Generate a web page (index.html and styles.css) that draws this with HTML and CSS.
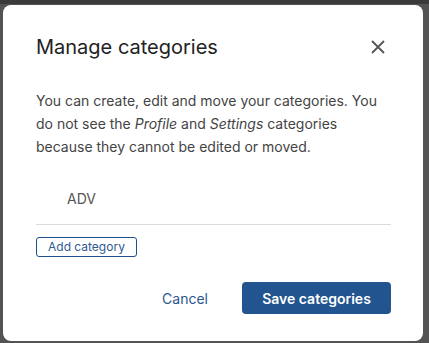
FILE: index.html
```html
<!DOCTYPE html>
<html lang="en">
<head>
    <meta charset="UTF-8">
    <meta name="viewport" content="width=device-width, initial-scale=1.0">
    <title>Manage categories</title>
    <link rel="stylesheet" href="styles.css">
</head>
<body>

    <!-- Manage categories dialog -->
    <div class="modal">
        <div class="modal-header">
            <h2>Manage categories</h2>
            <button class="close-btn" aria-label="Close">
                <svg width="14" height="14" viewBox="0 0 14 14">
                    <path d="M1 1 L13 13 M13 1 L1 13" stroke="#555" stroke-width="1.8" fill="none"/>
                </svg>
            </button>
        </div>

        <p class="intro">You can create, edit and move your categories. You do not see the <em>Profile</em> and <em>Settings</em> categories because they cannot be edited or moved.</p>

        <div class="category-list">
            <div class="category-item">ADV</div>
        </div>

        <button class="add-btn">Add category</button>

        <div class="modal-footer">
            <button class="cancel-btn">Cancel</button>
            <button class="save-btn">Save categories</button>
        </div>
    </div>

</body>
</html>
```

FILE: styles.css
```css
body {
    margin: 0;
    background: #535353;
    font-family: Inter, "Noto Sans", sans-serif;
    height: 343px;
    overflow: hidden;
    border-top: 4px solid #3a3a3a;
    box-sizing: border-box;
}
.modal {
    background: white;
    width: 420px;
    height: 336px;
    margin: 1px 0 0 3px;
    padding: 30px 32px 0 33px;
    box-sizing: border-box;
    border-radius: 8px;
}
.modal-header {
    display: flex;
    align-items: center;
    justify-content: space-between;
    height: 24px;
}
.modal-header h2 {
    margin: 0;
    font-size: 20px;
    font-weight: 400;
    color: #222;
    line-height: 24px;
}
.close-btn {
    background: none;
    border: none;
    padding: 0;
    margin-right: 6px;
    width: 14px;
    height: 14px;
    cursor: pointer;
}
.intro {
    margin: 30px 0 0;
    font-size: 14px;
    line-height: 23px;
    color: #444;
}
.category-list {
    margin-top: 31px;
    border-bottom: 1px solid #dcdcdc;
}
.category-item {
    padding: 0 0 15px 31px;
    font-size: 14px;
    line-height: 20px;
    color: #555;
}
.add-btn {
    margin-top: 12px;
    height: 20px;
    padding: 0 11px;
    background: white;
    border: 1px solid #1f4e8c;
    border-radius: 3px;
    color: #2f5a92;
    font-family: inherit;
    font-size: 12px;
    line-height: 18px;
    cursor: pointer;
}
.modal-footer {
    display: flex;
    justify-content: flex-end;
    align-items: center;
    gap: 8px;
    margin-top: 25px;
}
.cancel-btn {
    background: none;
    border: none;
    padding: 0 26px;
    height: 32px;
    color: #2a5690;
    font-family: inherit;
    font-size: 14px;
    cursor: pointer;
}
.save-btn {
    height: 32px;
    width: 149px;
    background: #22548f;
    border: none;
    border-radius: 4px;
    color: white;
    font-family: inherit;
    font-size: 14px;
    font-weight: 600;
    cursor: pointer;
}
```
